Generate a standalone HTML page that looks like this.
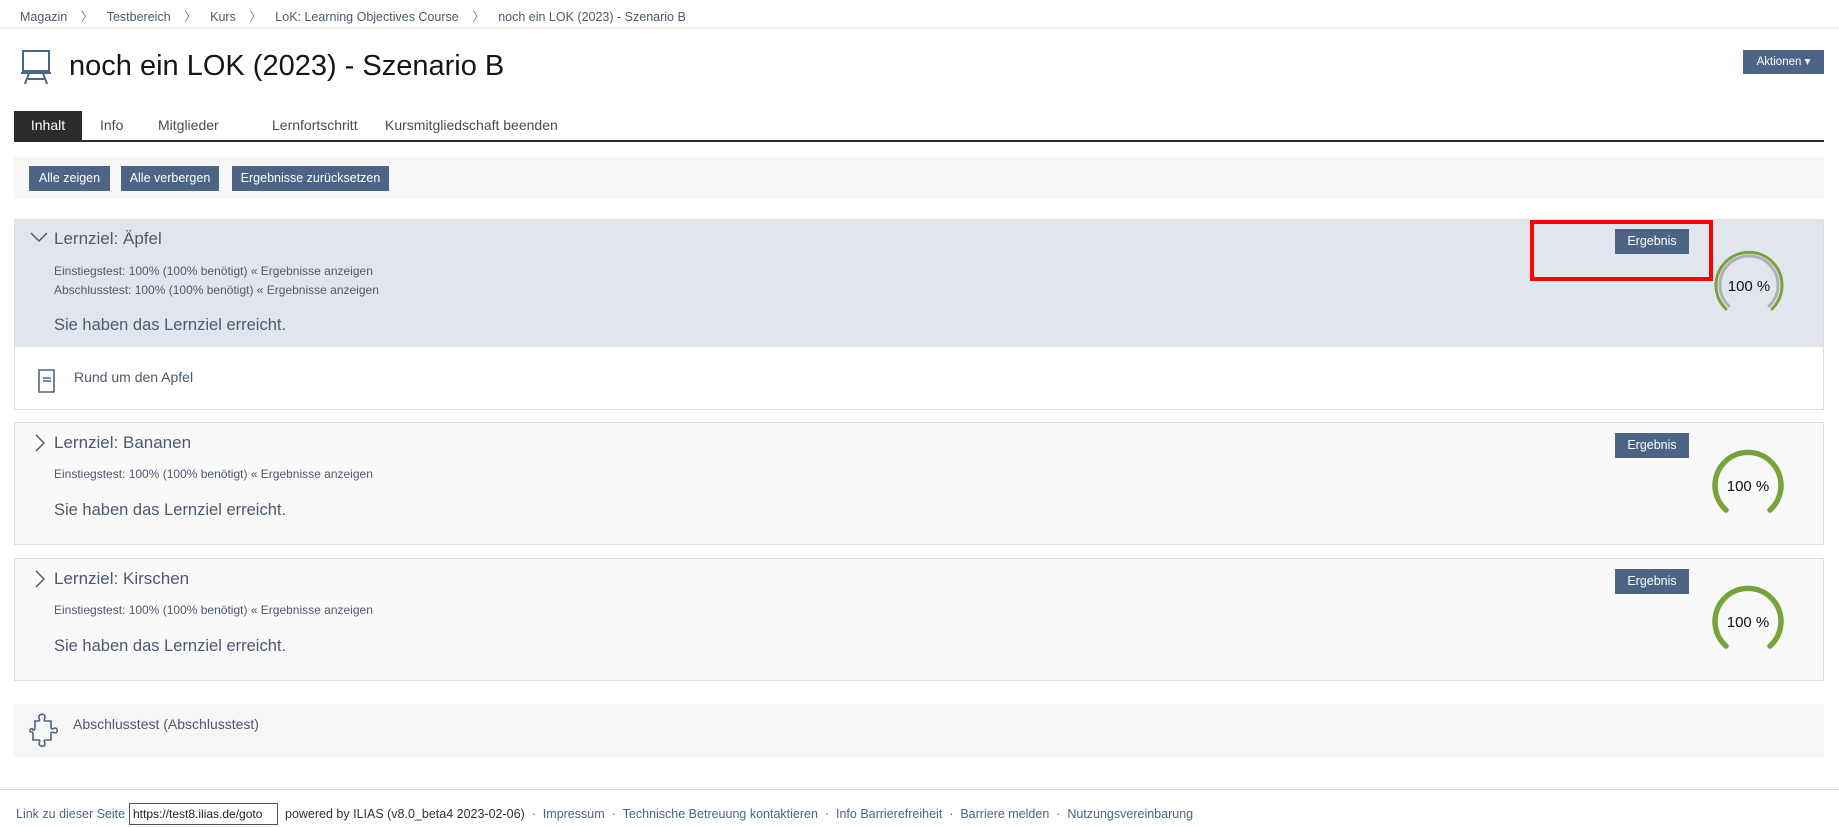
<!DOCTYPE html>
<html><head><meta charset="utf-8"><style>
*{box-sizing:border-box;margin:0;padding:0}
body{width:1839px;height:827px;background:#fff;font-family:"Liberation Sans",sans-serif;color:#4c4c4c;position:relative;overflow:hidden}
.a{position:absolute;white-space:nowrap}
.btn{position:absolute;background:#4c6586;color:#fff;font-size:12.5px;text-align:center;line-height:25px;white-space:nowrap}
.panel{position:absolute;left:14px;width:1810px;border:1px solid #ddd;background:#f9f9f9}
.t{font-size:17px;color:#4c5a6e}
.s{font-size:12px;color:#4c5a6e}
.m{font-size:16.5px;color:#4c5a6e}
.tab{position:absolute;top:111px;height:29px;line-height:29px;font-size:14px;color:#4c4c4c}
.ft{font-size:12.5px;color:#4c6586}
</style></head><body>
<div class="a" style="left:20px;top:6px;font-size:12.5px;color:#4c5a6e">Magazin <span style="color:#777;padding:0 10px">〉</span> Testbereich <span style="color:#777;padding:0 10px">〉</span> Kurs <span style="color:#777;padding:0 10px">〉</span> LoK: Learning Objectives Course <span style="color:#777;padding:0 10px">〉</span> noch ein LOK (2023) - Szenario B</div>
<div class="a" style="left:0;top:27px;width:1839px;height:2px;background:#f0f0f0"></div>
<svg class="a" style="left:20px;top:49px" width="34" height="36" viewBox="0 0 34 36" fill="none" stroke="#4c6586" stroke-width="2"><rect x="3" y="2" width="26" height="20"/><path d="M1 24h30M9 24l-4 11M23 24l4 11M8 30h18"/></svg>
<div class="a" style="left:69px;top:50px;font-size:29px;color:#161616">noch ein LOK (2023) - Szenario B</div>
<div class="btn" style="left:1743px;top:50px;width:81px;height:24px;font-size:11.5px;line-height:24px">Aktionen ▾</div>
<div class="tab" style="left:14px;width:68px;background:#2c2c2c;color:#fff;text-align:center">Inhalt</div>
<div class="tab" style="left:100px">Info</div>
<div class="tab" style="left:158px">Mitglieder</div>
<div class="tab" style="left:272px">Lernfortschritt</div>
<div class="tab" style="left:385px">Kursmitgliedschaft beenden</div>
<div class="a" style="left:14px;top:140px;width:1810px;height:2px;background:#2c2c2c"></div>
<div class="a" style="left:14px;top:157px;width:1810px;height:42px;background:#f6f6f6"></div>
<div class="btn" style="left:29px;top:166px;width:81px;height:25px">Alle zeigen</div>
<div class="btn" style="left:121px;top:166px;width:98px;height:25px">Alle verbergen</div>
<div class="btn" style="left:232px;top:166px;width:157px;height:25px">Ergebnisse zurücksetzen</div>

<!-- panel 1 -->
<div class="panel" style="top:219px;height:191px;background:#fff">
 <div style="position:absolute;left:0;top:0;width:100%;height:127px;background:#e1e6ee"></div>
</div>
<svg class="a" style="left:30px;top:232px" width="18" height="12"><path d="M1 1l8 8 8-8" fill="none" stroke="#4c5a6e" stroke-width="1.5"/></svg>
<div class="a t" style="left:54px;top:229px">Lernziel: Äpfel</div>
<div class="a s" style="left:54px;top:264px">Einstiegstest: 100% (100% benötigt) « Ergebnisse anzeigen</div>
<div class="a s" style="left:54px;top:283px">Abschlusstest: 100% (100% benötigt) « Ergebnisse anzeigen</div>
<div class="a m" style="left:54px;top:316px">Sie haben das Lernziel erreicht.</div>
<div class="btn" style="left:1615px;top:229px;width:74px;height:25px">Ergebnis</div>
<div class="a" style="left:1530px;top:220px;width:183px;height:61px;border:4px solid #f00"></div>
<svg class="a" style="left:1706px;top:242px" width="86" height="86" viewBox="-43 -43 86 86"><path d="M-23 24A33 33 0 1 1 23 24" fill="none" stroke="#76a33a" stroke-width="3" stroke-linecap="round"/><path d="M-20 21A29 29 0 1 1 20 21" fill="none" stroke="#b0b0b0" stroke-width="3" stroke-linecap="round"/><text x="0" y="6" text-anchor="middle" font-size="15" fill="#111" font-family="Liberation Sans">100 %</text></svg>
<svg class="a" style="left:37px;top:368px" width="20" height="26" fill="none" stroke="#4c6586" stroke-width="1.6"><path d="M2 2h15v22H2z"/><path d="M6 10h8M6 13h8"/></svg>
<div class="a" style="left:74px;top:369px;font-size:14px;color:#4c5a6e">Rund um den Apfel</div>

<!-- panel 2 -->
<div class="panel" style="top:422px;height:123px"></div>
<svg class="a" style="left:34px;top:434px" width="12" height="18"><path d="M2 1l8 8-8 8" fill="none" stroke="#4c5a6e" stroke-width="1.5"/></svg>
<div class="a t" style="left:54px;top:433px">Lernziel: Bananen</div>
<div class="a s" style="left:54px;top:467px">Einstiegstest: 100% (100% benötigt) « Ergebnisse anzeigen</div>
<div class="a m" style="left:54px;top:501px">Sie haben das Lernziel erreicht.</div>
<div class="btn" style="left:1615px;top:433px;width:74px;height:25px">Ergebnis</div>
<svg class="a" style="left:1705px;top:442px" width="86" height="86" viewBox="-43 -43 86 86"><path d="M-22 25A33 33 0 1 1 22 25" fill="none" stroke="#76a33a" stroke-width="5.5" stroke-linecap="round"/><text x="0" y="6" text-anchor="middle" font-size="15" fill="#111" font-family="Liberation Sans">100 %</text></svg>

<!-- panel 3 -->
<div class="panel" style="top:558px;height:123px"></div>
<svg class="a" style="left:34px;top:570px" width="12" height="18"><path d="M2 1l8 8-8 8" fill="none" stroke="#4c5a6e" stroke-width="1.5"/></svg>
<div class="a t" style="left:54px;top:569px">Lernziel: Kirschen</div>
<div class="a s" style="left:54px;top:603px">Einstiegstest: 100% (100% benötigt) « Ergebnisse anzeigen</div>
<div class="a m" style="left:54px;top:637px">Sie haben das Lernziel erreicht.</div>
<div class="btn" style="left:1615px;top:569px;width:74px;height:25px">Ergebnis</div>
<svg class="a" style="left:1705px;top:578px" width="86" height="86" viewBox="-43 -43 86 86"><path d="M-22 25A33 33 0 1 1 22 25" fill="none" stroke="#76a33a" stroke-width="5.5" stroke-linecap="round"/><text x="0" y="6" text-anchor="middle" font-size="15" fill="#111" font-family="Liberation Sans">100 %</text></svg>

<!-- abschlusstest -->
<div class="a" style="left:14px;top:704px;width:1810px;height:53px;background:#f6f6f6"></div>
<svg class="a" style="left:29px;top:712px" width="32" height="36" viewBox="0 0 32 36" fill="none" stroke="#4c6586" stroke-width="1.6"><path d="M10 4c2-3 6-2 6 1 0 2-2 3 0 4h6v7c1 2 3 0 4 0 3 0 3 5 0 5-1 0-3-2-4 0v7h-6c-2 1 0 2 0 4 0 3-5 3-6 0 0-2 2-3 0-4H4v-7c-1-2-3 0-3-2 0-3 3-3 3-1 1 1 2-1 2-2V9h4c2-1-1-3 0-5z"/></svg>
<div class="a" style="left:73px;top:716px;font-size:14px;color:#4c5a6e">Abschlusstest (Abschlusstest)</div>

<!-- footer -->
<div class="a" style="left:0;top:789px;width:1839px;height:1px;background:#ddd"></div>
<div class="a ft" style="left:16px;top:807px">Link zu dieser Seite</div>
<div class="a" style="left:129px;top:803px;width:149px;height:22px;border:1px solid #555;font-size:12px;color:#222;line-height:20px;padding-left:3px;overflow:hidden">https://test8.ilias.de/goto</div>
<div class="a ft" style="left:285px;top:807px"><span style="color:#333">powered by ILIAS (v8.0_beta4 2023-02-06)</span> &nbsp;· &nbsp;Impressum &nbsp;· &nbsp;Technische Betreuung kontaktieren &nbsp;· &nbsp;Info Barrierefreiheit &nbsp;· &nbsp;Barriere melden &nbsp;· &nbsp;Nutzungsvereinbarung</div>
</body></html>
